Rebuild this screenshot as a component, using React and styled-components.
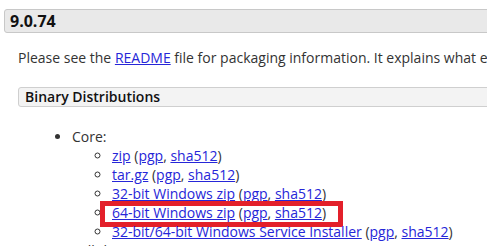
import React from 'react';
import styled, { createGlobalStyle } from 'styled-components';

const GlobalStyle = createGlobalStyle`
  html, body {
    margin: 0;
    padding: 0;
    overflow: hidden;
    background: #fff;
  }
  body {
    font-family: "Open Sans", "Liberation Sans", sans-serif;
    color: #333;
  }
`

const Page = styled.div`
  width: 760px;
  padding: 9px 0 0 4px;
`

const VersionBar = styled.h3`
  margin: 0;
  height: 24px;
  box-sizing: border-box;
  border: 1px solid #c8c8c8;
  border-radius: 3px;
  background: #e9e9e9;
  padding-left: 5px;
  font-size: 16px;
  font-weight: 700;
  line-height: 22px;
  color: #111;
`

const Section = styled.div`
  padding-left: 14px;
`

const Para = styled.p`
  margin: 15px 0 0;
  font-size: 14px;
  line-height: 20px;
  white-space: nowrap;
`

const SubBar = styled.h4`
  margin: 19px 0 0;
  height: 20px;
  box-sizing: border-box;
  border: 1px solid #cfcfcf;
  border-radius: 3px;
  background: #f3f3f3;
  padding-left: 6px;
  font-size: 14px;
  font-weight: 600;
  line-height: 18px;
  color: #111;
`

const List = styled.ul`
  margin: 20px 0 0;
  padding-left: 54px;
  font-size: 14px;
  line-height: 19px;
  list-style: disc;
`

const SubList = styled.ul`
  margin: 0;
  padding-left: 40px;
  list-style: circle;
`

const Item = styled.li`
  position: relative;
  white-space: nowrap;
`

const Link = styled.a`
  color: #2626d8;
  text-decoration: underline;
`

const Highlight = styled.span`
  position: absolute;
  left: -12px;
  top: -2px;
  width: 243px;
  height: 26px;
  box-sizing: border-box;
  border: 5px solid #e3202a;
  pointer-events: none;
`

const downloads = [
  '',
  'zip',
  'tar.gz',
  '32-bit Windows zip',
  '64-bit Windows zip',
  '32-bit/64-bit Windows Service Installer',
];

const Download = ({ name, marked }) => (
  <Item>
    <Link href="#">{name}</Link> (<Link href="#">pgp</Link>, <Link href="#">sha512</Link>)
    {marked && <Highlight />}
  </Item>
);

export default function App() {
  return (
    <Page>
      <GlobalStyle />
      <VersionBar>9.0.74</VersionBar>
      <Section>
        <Para>
          Please see the <Link href="#">README</Link> file for packaging information. It explains what every distribution contains.
        </Para>
        <SubBar>Binary Distributions</SubBar>
        <List>
          <Item>
            Core:
            <SubList>
              {downloads.slice(1).map(d => (
                <Download key={d} name={d} marked={d === '64-bit Windows zip'} />
              ))}
            </SubList>
          </Item>
          <Item>
            Full documentation:
            <SubList>
              <Download name="tar.gz" />
            </SubList>
          </Item>
        </List>
      </Section>
    </Page>
  );
}
